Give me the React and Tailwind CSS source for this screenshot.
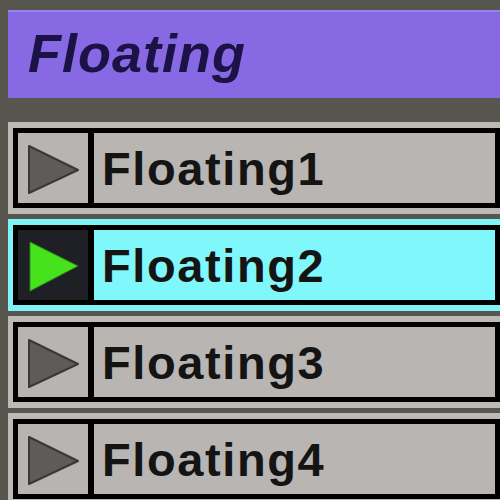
import React from "react"

const rows = [
  { name: "Floating1", active: false },
  { name: "Floating2", active: true },
  { name: "Floating3", active: false },
  { name: "Floating4", active: false },
]

function Arrow({ active }) {
  return (
    <svg width="70" height="70" viewBox="0 0 70 70">
      {active ? (
        <polygon points="12,12 60,36 12,61" fill="#46e31c" stroke="#2a8a14" strokeWidth="1" />
      ) : (
        <polygon points="11,13 60,37 11,60" fill="#5f5b59" stroke="#3a3837" strokeWidth="2" strokeLinejoin="round" />
      )}
    </svg>
  )
}

function Row({ name, active }) {
  return (
    <div className={active ? "bg-[#7ef4f8] py-[6px] pl-[5px]" : "bg-[#bdb9b5] py-[6px] pl-[5px]"}>
      <div className="flex h-[80px] border-[5px] border-black">
        <div className={active ? "w-[70px] bg-[#1f1f26] flex items-center justify-center" : "w-[70px] bg-[#b8b4b1] flex items-center justify-center"}>
          <Arrow active={active} />
        </div>
        <div className={active ? "flex-1 border-l-[6px] border-black bg-[#80f7fb] flex items-center pl-[8px]" : "flex-1 border-l-[6px] border-black bg-[#b9b5b2] flex items-center pl-[8px]"}>
          <span className="text-[47px] font-bold tracking-[1.6px] text-[#141414] leading-none font-['Liberation_Sans',Arial,sans-serif]">
            {name}
          </span>
        </div>
      </div>
    </div>
  )
}

export default function App() {
  return (
    <div className="w-[500px] h-[500px] overflow-hidden bg-[#56564f] pt-[10px] pl-[8px]">
      <div className="w-[510px] h-[88px] bg-[#8769e3] border-t-2 border-[#9a82ea] flex items-center pl-[20px] pb-[4px]">
        <span className="text-[54px] font-bold italic tracking-[1px] text-[#1b1346] leading-none font-['Liberation_Sans',Arial,sans-serif]">
          Floating
        </span>
      </div>
      <div className="mt-[24px] w-[492px] flex flex-col gap-[5px]">
        {rows.map((r) => (
          <Row key={r.name} name={r.name} active={r.active} />
        ))}
      </div>
    </div>
  )
}
